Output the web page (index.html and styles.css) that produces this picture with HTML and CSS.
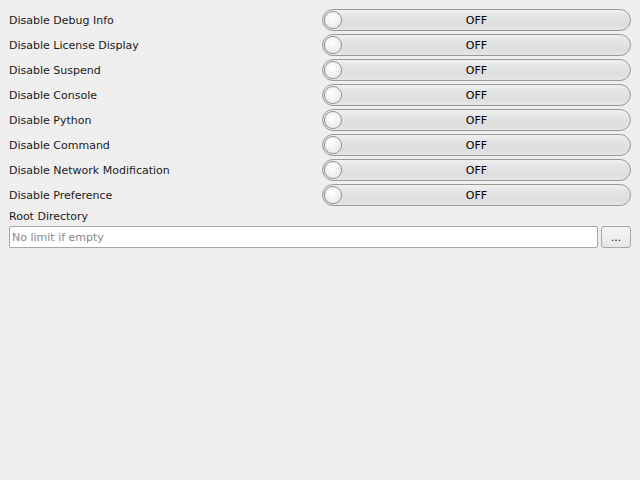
FILE: index.html
```html
<!DOCTYPE html>
<html lang="en">
<head>
  <meta charset="UTF-8" />
  <title>Settings</title>
  <link rel="stylesheet" href="styles.css">
</head>
<body>
  <div class="settings">
    <label>Disable Debug Info</label><div class="toggle"><span class="knob"></span><span class="state">OFF</span></div>
    <label>Disable License Display</label><div class="toggle"><span class="knob"></span><span class="state">OFF</span></div>
    <label>Disable Suspend</label><div class="toggle"><span class="knob"></span><span class="state">OFF</span></div>
    <label>Disable Console</label><div class="toggle"><span class="knob"></span><span class="state">OFF</span></div>
    <label>Disable Python</label><div class="toggle"><span class="knob"></span><span class="state">OFF</span></div>
    <label>Disable Command</label><div class="toggle"><span class="knob"></span><span class="state">OFF</span></div>
    <label>Disable Network Modification</label><div class="toggle"><span class="knob"></span><span class="state">OFF</span></div>
    <label>Disable Preference</label><div class="toggle"><span class="knob"></span><span class="state">OFF</span></div>
  </div>

  <div class="root-dir">
    <label>Root Directory</label>
    <div class="path-row">
      <input type="text" placeholder="No limit if empty">
      <button>...</button>
    </div>
  </div>
</body>
</html>
```

FILE: styles.css
```css
body { margin: 0; padding: 9px 9px 0 9px; background: #efefef; color: #1a1a1a; font-family: "DejaVu Sans", sans-serif; font-size: 11px; }
.settings { display: grid; grid-template-columns: 313px 1fr; row-gap: 3px; align-items: center; }
.settings label { line-height: 14px; padding-top: 2px; }
.toggle { position: relative; height: 20px; border: 1px solid #9a9a9a; border-radius: 11px; background: linear-gradient(#f0f0f0, #e4e4e4 30%, #dedede 75%, #e6e6e6); display: flex; align-items: center; justify-content: center; }
.knob { position: absolute; left: 1px; top: 1px; box-sizing: border-box; width: 18px; height: 18px; border: 1px solid #8e8e8e; border-radius: 50%; background: radial-gradient(circle at 40% 35%, #ffffff, #f2f2f2 50%, #dcdcdc); box-shadow: inset 0 0 0 1px #fafafa; }
.state { color: #000; padding-top: 2px; line-height: 14px; }
.root-dir { margin-top: 3px; }
.root-dir label { display: block; line-height: 14px; padding-top: 1px; margin-bottom: -1px; }
.path-row { display: flex; gap: 3px; margin-top: 3px; }
.path-row input { flex: 1; height: 22px; box-sizing: border-box; margin: 0; padding: 0 2px; border: 1px solid #a6a6a6; border-radius: 2px; background: #fff; font-family: "DejaVu Sans", sans-serif; font-size: 11px; color: #1a1a1a; outline: none; }
.path-row input::placeholder { color: #8a8a8a; }
.path-row button { width: 30px; height: 22px; margin: 0; padding: 0; border: 1px solid #a6a6a6; border-radius: 3px; background: linear-gradient(#f4f4f4, #e8e8e8); font-family: "DejaVu Sans", sans-serif; font-size: 11px; color: #1a1a1a; }
```
